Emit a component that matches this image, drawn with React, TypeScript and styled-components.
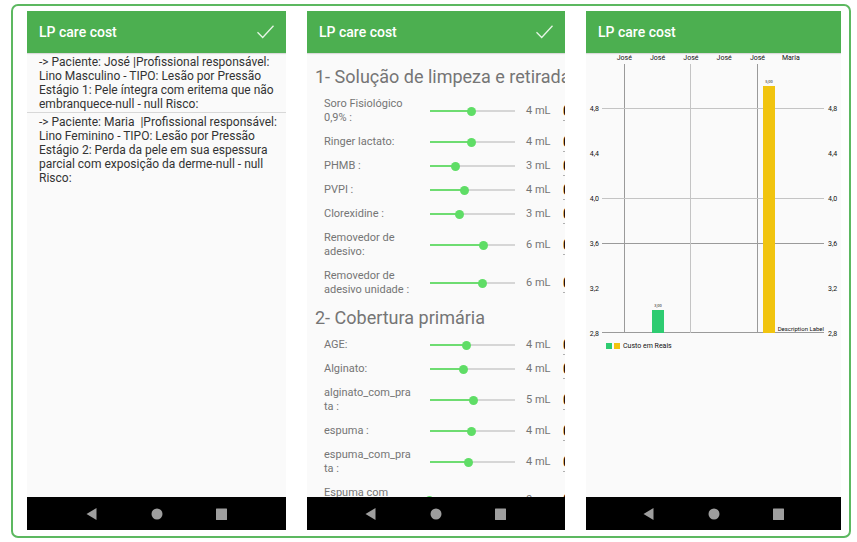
import React, { useState } from "react";
import styled, { createGlobalStyle } from "styled-components";

const GlobalStyle = createGlobalStyle`
  *, *::before, *::after { box-sizing: border-box; }
  body { margin: 0; background: #fff; font-family: Roboto, "Liberation Sans", sans-serif; }
  button, input { font: inherit; border: 0; padding: 0; margin: 0; background: none; }
`;

const Page = styled.main`
  height: 100vh;
  padding: 4px 6px 4px 11px;
  display: flex;
`;

const Frame = styled.div`
  flex: 1;
  min-width: 0;
  display: grid;
  grid-template-columns: 259fr 258fr 255fr;
  column-gap: 21px;
  padding: 5px 8px 6px 14px;
  border: 2px solid #5cb860;
  border-radius: 7px;
`;

const Phone = styled.section`
  min-width: 0;
  min-height: 0;
  display: flex;
  flex-direction: column;
  overflow: hidden;
  background: #fafafa;
`;

const AppBar = styled.header`
  flex: none;
  height: 42px;
  padding: 0 12px;
  display: flex;
  align-items: center;
  justify-content: space-between;
  background: #4caf50;
  color: #fff;
  box-shadow: 0 1px 1px rgba(0, 0, 0, 0.12);
`;

const AppTitle = styled.h1`
  margin: 0;
  font-size: 14px;
  line-height: 20px;
  font-weight: 500;
`;

const IconButton = styled.button`
  display: flex;
  color: inherit;
`;

const Body = styled.div`
  flex: 1;
  min-height: 0;
  overflow: hidden;
`;

const NavBar = styled.nav`
  flex: none;
  height: 33px;
  display: flex;
  align-items: center;
  justify-content: center;
  gap: 53px;
  background: #000;
  color: #9e9e9e;
`;

const PatientList = styled.ul`
  margin: 0;
  padding: 0;
  list-style: none;
`;

const Patient = styled.li`
  padding: 2px 4px 1px 12px;
  font-size: 12px;
  line-height: 14px;
  color: #333;
  white-space: pre-wrap;
  & + & { border-top: 1px solid #d8d8d8; }
`;

const Supplies = styled(Body)`
  padding-top: 8px;
`;

const GroupTitle = styled.h2`
  margin: 0;
  padding-left: 8px;
  font-size: 18px;
  line-height: 31px;
  font-weight: 400;
  color: #757575;
  white-space: nowrap;
`;

const SupplyRow = styled.div`
  display: grid;
  grid-template-columns: 90px 1fr 37px 2px;
  align-items: center;
  padding-left: 17px;
  font-size: 11px;
  line-height: 14px;
  color: #757575;
`;

const SupplyLabel = styled.label`
  padding: 5px 0;
  overflow-wrap: anywhere;
`;

const Slider = styled.input<{ $fill: number }>`
  appearance: none;
  justify-self: stretch;
  min-width: 0;
  height: 9px;
  margin: 0 7px 0 11px;
  background: linear-gradient(to right, #6edc71 ${(p) => p.$fill}%, #d6d6d6 ${(p) => p.$fill}%)
    center / calc(100% - 9px) 2px no-repeat;
  &::-webkit-slider-thumb {
    appearance: none;
    width: 9px;
    height: 9px;
    border-radius: 50%;
    background: #5fdd66;
  }
`;

const Amount = styled.output`
  white-space: nowrap;
`;

const PriceField = styled.input`
  width: 40px;
  height: 20px;
  border-bottom: 1px solid #b0b0b0;
  color: #111;
  font-size: 14px;
  font-weight: 700;
`;

const Chart = styled.svg`
  display: block;
  width: 100%;
  font-family: Roboto, "Liberation Sans", sans-serif;
`;

const Legend = styled.div`
  display: flex;
  align-items: center;
  gap: 2px;
  padding: 4px 20px;
  font-size: 7px;
  line-height: 10px;
  color: #111;
`;

const Swatch = styled.span<{ $color: string }>`
  width: 6px;
  height: 6px;
  background: ${(p) => p.$color};
`;

const LegendText = styled.span`
  padding-left: 1px;
`;

function Bar({ confirm }: { confirm?: boolean }) {
  return (
    <AppBar>
      <AppTitle>LP care cost</AppTitle>
      {confirm && (
        <IconButton aria-label="Confirmar">
          <svg width="17" height="14" viewBox="0 0 17 14" fill="none" stroke="#e6f5e6" strokeWidth="1.3">
            <path d="M0.5 7.3 L5.7 12.5 L16.5 0.8" />
          </svg>
        </IconButton>
      )}
    </AppBar>
  );
}

function Navigation() {
  return (
    <NavBar>
      <IconButton aria-label="Voltar">
        <svg width="12" height="12" viewBox="0 0 12 12" fill="currentColor"><path d="M10.5 0 V12 L0.5 6 Z" /></svg>
      </IconButton>
      <IconButton aria-label="Início">
        <svg width="12" height="12" viewBox="0 0 12 12" fill="currentColor"><circle cx="6" cy="6" r="5.5" /></svg>
      </IconButton>
      <IconButton aria-label="Recentes">
        <svg width="12" height="12" viewBox="0 0 12 12" fill="currentColor"><rect x="0" y="0.5" width="11" height="11.5" rx="0.5" /></svg>
      </IconButton>
    </NavBar>
  );
}

const patients = [
  "-> Paciente: José |Profissional responsável: Lino Masculino - TIPO: Lesão por Pressão Estágio 1: Pele íntegra com eritema que não embranquece-null - null Risco:",
  "-> Paciente: Maria  |Profissional responsável: Lino Feminino - TIPO: Lesão por Pressão Estágio 2: Perda da pele em sua espessura parcial com exposição da derme-null - null Risco:",
];

type Item = { id: string; label: string; level: number; amount: string };

const groups: { title: string; items: Item[] }[] = [
  {
    title: "1- Solução de limpeza e retirada",
    items: [
      { id: "soro", label: "Soro Fisiológico 0,9% :", level: 49, amount: "4 mL" },
      { id: "ringer", label: "Ringer lactato:", level: 49, amount: "4 mL" },
      { id: "phmb", label: "PHMB :", level: 31, amount: "3 mL" },
      { id: "pvpi", label: "PVPI :", level: 41, amount: "4 mL" },
      { id: "clorexidine", label: "Clorexidine :", level: 35, amount: "3 mL" },
      { id: "removedor", label: "Removedor de adesivo:", level: 64, amount: "6 mL" },
      { id: "removedor-un", label: "Removedor de adesivo unidade :", level: 62, amount: "6 mL" },
    ],
  },
  {
    title: "2- Cobertura primária",
    items: [
      { id: "age", label: "AGE:", level: 43, amount: "4 mL" },
      { id: "alginato", label: "Alginato:", level: 40, amount: "4 mL" },
      { id: "alginato-prata", label: "alginato_com_prata :", level: 52, amount: "5 mL" },
      { id: "espuma", label: "espuma :", level: 49, amount: "4 mL" },
      { id: "espuma-prata", label: "espuma_com_prata :", level: 46, amount: "4 mL" },
      { id: "espuma-com", label: "Espuma com silicone :", level: 0, amount: "0" },
    ],
  },
];

function Supply({ item }: { item: Item }) {
  const [level, setLevel] = useState(item.level);
  return (
    <SupplyRow>
      <SupplyLabel htmlFor={item.id}>{item.label}</SupplyLabel>
      <Slider
        id={item.id}
        type="range"
        min={0}
        max={100}
        value={level}
        $fill={level}
        onChange={(e) => setLevel(Number(e.target.value))}
      />
      <Amount htmlFor={item.id}>{item.amount}</Amount>
      <PriceField aria-label={`Custo ${item.label}`} defaultValue="0" />
    </SupplyRow>
  );
}

const names = ["José", "José", "José", "José", "José", "Maria"];
const ticks = ["4,8", "4,4", "4,0", "3,6", "3,2", "2,8"];
const GREEN = "#2ecc71";
const YELLOW = "#f1c40f";

function CostChart() {
  return (
    <Chart viewBox="0 0 255 284" role="img" aria-label="Custo em Reais">
      <g stroke="#9a9a9a" strokeWidth="1">
        <path d="M38.5 11V280M171.5 11V280M16 190.5H238M16 279.5H238" />
        <path d="M104.5 11V280M16 55.5H238M16 145.5H238" stroke="#c4c4c4" />
      </g>
      <rect x="66" y="257" width="12" height="23" fill={GREEN} />
      <rect x="177" y="33" width="12" height="247" fill={YELLOW} />
      <g fill="#111" fontSize="7">
        {names.map((n, i) => (
          <text key={i} x={38.3 + i * 33.3} y="6.5" textAnchor="middle">{n}</text>
        ))}
        {ticks.map((t, i) => (
          <g key={t}>
            <text x="13" y={58 + i * 45} textAnchor="end">{t}</text>
            <text x="242" y={58 + i * 45}>{t}</text>
          </g>
        ))}
      </g>
      <g fill="#222" fontSize="4" textAnchor="middle">
        <text x="72" y="254">3,00</text>
        <text x="183" y="30">5,00</text>
      </g>
      <text x="238" y="278" fontSize="6" fill="#111" textAnchor="end">Description Label</text>
    </Chart>
  );
}

export default function App() {
  return (
    <>
      <GlobalStyle />
      <Page>
        <Frame>
          <Phone>
            <Bar confirm />
            <Body>
              <PatientList>
                {patients.map((p) => <Patient key={p}>{p}</Patient>)}
              </PatientList>
            </Body>
            <Navigation />
          </Phone>
          <Phone>
            <Bar confirm />
            <Supplies>
              {groups.map((g) => (
                <React.Fragment key={g.title}>
                  <GroupTitle>{g.title}</GroupTitle>
                  {g.items.map((item) => <Supply key={item.id} item={item} />)}
                </React.Fragment>
              ))}
            </Supplies>
            <Navigation />
          </Phone>
          <Phone>
            <Bar />
            <Body>
              <CostChart />
              <Legend>
                <Swatch $color={GREEN} />
                <Swatch $color={YELLOW} />
                <LegendText>Custo em Reais</LegendText>
              </Legend>
            </Body>
            <Navigation />
          </Phone>
        </Frame>
      </Page>
    </>
  );
}
